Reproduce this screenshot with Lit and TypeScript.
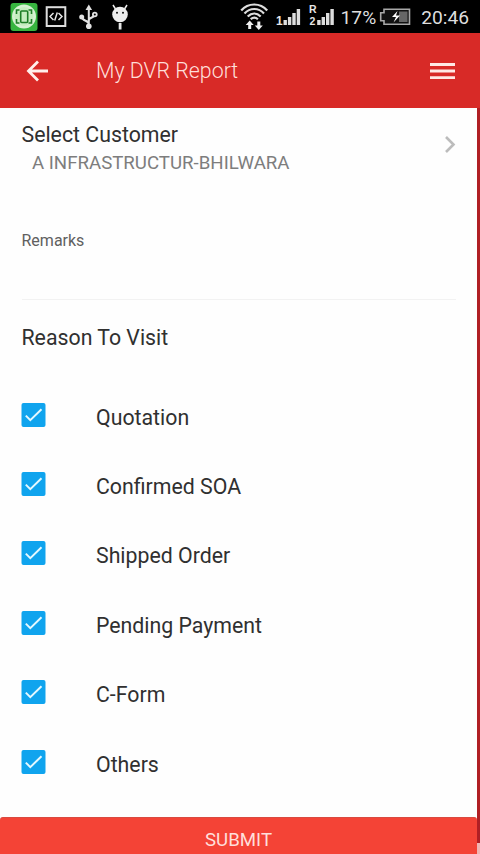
import { LitElement, html, css, svg } from "lit";
import { customElement, property } from "lit/decorators.js";

@customElement("status-bar")
class StatusBar extends LitElement {
  static styles = css`
    :host { display: block; height: 33px; background: #000; color: #dedede; }
    .bar { display: flex; height: 33px; align-items: center; justify-content: space-between; padding: 0 11px 0 10px; box-sizing: border-box; }
    .side { display: flex; align-items: center; height: 33px; }
    .text { font: 400 19.200px/33px Roboto, sans-serif; white-space: nowrap; }
    .clock { margin-left: 10px; padding-top: 2px; }
    .percent { padding-top: 2px; margin: 0 1px 0 6px; }
    svg { display: block; }
    .tiny { font: 700 12px "Liberation Sans", sans-serif; fill: #e6e6e6; }
    .sim { font-size: 10.500px; }
  `;

  bars(x: number) {
    return svg`<g fill="#dedede">
      <rect x=${x} y="20" width="3.4" height="5"/>
      <rect x=${x + 4.4} y="17" width="3.4" height="8"/>
      <rect x=${x + 8.8} y="13" width="3.4" height="12"/>
      <rect x=${x + 13.2} y="9" width="3.4" height="16"/>
    </g>`;
  }

  render() {
    return html`<div class="bar">
      <div class="side">
        <svg width="124" height="33" viewBox="10 0 124 33">
          <rect x="10.500" y="3" width="27" height="28" rx="3" fill="#37b53f"/>
          <circle cx="24" cy="16.500" r="12" fill="#d5f1d2"/>
          <circle cx="24" cy="16.500" r="9.500" fill="#c5edc0"/>
          <g fill="none" stroke="#1d7d26" stroke-width="1.600">
            <rect x="20.700" y="11" width="7" height="11.500" rx="1"/>
            <path d="M16.500 14v-4h3M28.500 10h3v4M16.500 19v4h3M28.500 23h3v-4"/>
          </g>
          <rect x="46.700" y="7.200" width="18.600" height="18.800" fill="none" stroke="#dedede" stroke-width="2"/>
          <path d="M53.500 13l-3.500 3.500 3.500 3.500M58.500 13l3.500 3.500-3.500 3.500M57.300 12.500l-2.600 8" fill="none" stroke="#e6e6e6" stroke-width="1.500"/>
          <path d="M88.800 8v17M88.800 24c0-4-7-2.500-7-7.500M88.800 20.500c0-3.500 6.500-2.500 6.500-7" fill="none" stroke="#e2e2e2" stroke-width="2"/>
          <g fill="#e2e2e2">
            <path d="M85.500 10l3.300-5.500 3.300 5.500z"/><circle cx="88.800" cy="26.300" r="2.800"/>
            <circle cx="81.700" cy="17" r="2.500"/><circle cx="94.800" cy="14.500" r="2.800"/>
          </g>
          <circle cx="94.800" cy="14.500" r="1" fill="#000"/>
          <path d="M115.500 9l-2.500-4M124.500 9l2.500-4" stroke="#ededed" stroke-width="1.500"/>
          <circle cx="120" cy="14.500" r="7.800" fill="#ededed"/>
          <path d="M118.700 23h2.800v6.500h-2.800z" fill="#e6e6e6"/>
          <circle cx="117" cy="12.700" r="1" fill="#111"/><circle cx="123" cy="12.700" r="1" fill="#111"/>
        </svg>
      </div>
      <div class="side">
        <svg width="95" height="33" viewBox="240 0 95 33">
          <g fill="none" stroke="#dedede" stroke-width="2.200">
            <path d="M241.200 10.500c7-8 19-8 26 0M244.500 13.500c5.500-6 14-6 19.500 0M247.700 16.500c4-4 9-4 13 0M250.700 19.200c2.300-2 5-2 7.200 0"/>
          </g>
          <path d="M249.700 20.500l4 4.500h-2.500v4h-3v-4h-2.500zM258.800 30l-4-4.500h2.500v-4h3v4h2.500z" fill="#f0f0f0"/>
          <text class="tiny" x="276" y="25">1</text>
          ${this.bars(283.5)}
          <text class="tiny sim" x="309" y="12.700">R</text>
          <text class="tiny sim" x="309.500" y="25">2</text>
          ${this.bars(317.2)}
        </svg>
        <span class="text percent">17%</span>
        <svg width="34" height="33" viewBox="378 0 34 33">
          <path d="M385 9.200h25.500v15H385v-3.500h-3.300v-8H385z" fill="#111" stroke="#a8a8a8" stroke-width="1.600"/>
          <rect x="400" y="11.500" width="8.500" height="10.500" fill="#666"/>
          <path d="M398.500 11l-5.500 6h4l-2.500 5.500 6.500-7h-4z" fill="#fff"/>
        </svg>
        <span class="text clock">20:46</span>
      </div>
    </div>`;
  }
}

@customElement("check-row")
class CheckRow extends LitElement {
  static properties = { label: { type: String } };
  @property() declare label: string;
  static styles = css`
    :host { display: flex; height: 69.400px; align-items: center; padding-left: 21px; gap: 50px; color: #303030; }
    .label { font: 400 21.300px/28px Roboto, sans-serif; padding-top: 6px; white-space: nowrap; }
    svg { display: block; flex: none; }
  `;
  render() {
    return html`<svg width="25" height="24" viewBox="0 0 25 24">
        <rect x="0.500" width="24" height="24" rx="2" fill="#10a4ee"/>
        <path d="M4.800 12.600l4.500 4.500L20.500 6.300" fill="none" stroke="#e4f8ff" stroke-width="2"/>
      </svg><span class="label">${this.label}</span>`;
  }
}

@customElement("app-root")
class AppRoot extends LitElement {
  static styles = css`
    :host { display: flex; flex-direction: column; width: 480px; height: 854px; overflow: hidden; background: #fefefe; font-family: Roboto, sans-serif; }
    header { height: 75px; flex: none; box-sizing: border-box; background: #d82a27; display: flex; align-items: center; padding: 0 25px 0 26px; color: #ffdfda; }
    .title { font-weight: 300; font-size: 21.300px; line-height: 28px; margin-left: 47px; flex: 1; }
    .body { flex: 1; min-height: 0; display: flex; }
    .content { width: 477px; overflow: hidden; display: flex; flex-direction: column; }
    .track { width: 3px; background: #f0b5b3; }
    .thumb { height: 735px; background: #b01f24; }
    .customer { display: flex; height: 98px; flex: none; padding: 13px 21px 0 21.500px; box-sizing: border-box; justify-content: space-between; }
    .name { font-size: 21.300px; line-height: 28px; color: #303030; }
    .value { font-size: 18.670px; line-height: 28px; color: #7d7d7d; padding-left: 10.500px; }
    .chevron { margin-top: 14px; }
    .remarks { height: 94px; flex: none; box-sizing: border-box; margin: 0 21px 0 21.500px; padding-top: 24.500px; border-bottom: 1px solid #f2f2f2; font-size: 16px; line-height: 20px; color: #606060; }
    .reason { height: 80px; flex: none; box-sizing: border-box; padding: 23.500px 0 0 21.500px; font-size: 21.300px; line-height: 28px; color: #303030; }
    .list { height: 437px; flex: none; }
    .submit { flex: 1; width: 477px; box-sizing: border-box; border-top: 1px solid #d94a40; border-radius: 3px 3px 0 0; background: #f44336; color: #ffdfda; font: 400 18.670px/24px Roboto, sans-serif; padding: 10px 0 0; text-align: center; white-space: nowrap; }
    svg { display: block; flex: none; }
  `;
  render() {
    const reasons = ["Quotation", "Confirmed SOA", "Shipped Order", "Pending Payment", "C-Form", "Others"];
    return html`
      <status-bar></status-bar>
      <header>
        <svg width="23" height="24" viewBox="0 0 23 24"><path d="M22 12H3M12 2.500L2.500 12l9.500 9.500" fill="none" stroke="#ffefeb" stroke-width="2.800"/></svg>
        <span class="title">My DVR Report</span>
        <svg width="25" height="18" viewBox="0 0 25 18"><path d="M0 2.500h25M0 9h25M0 15.700h25" stroke="#ffe9e5" stroke-width="2.800"/></svg>
      </header>
      <div class="body">
        <div class="content">
          <div class="customer">
            <div><div class="name">Select Customer</div><div class="value">A INFRASTRUCTUR-BHILWARA</div></div>
            <svg class="chevron" width="12" height="18" viewBox="0 0 12 18"><path d="M2 2l7.500 7.500L2 17" fill="none" stroke="#bcbcbc" stroke-width="2.600"/></svg>
          </div>
          <div class="remarks">Remarks</div>
          <div class="reason">Reason To Visit</div>
          <div class="list">${reasons.map((r) => html`<check-row .label=${r}></check-row>`)}</div>
          <div class="submit">SUBMIT</div>
        </div>
        <div class="track"><div class="thumb"></div></div>
      </div>`;
  }
}
